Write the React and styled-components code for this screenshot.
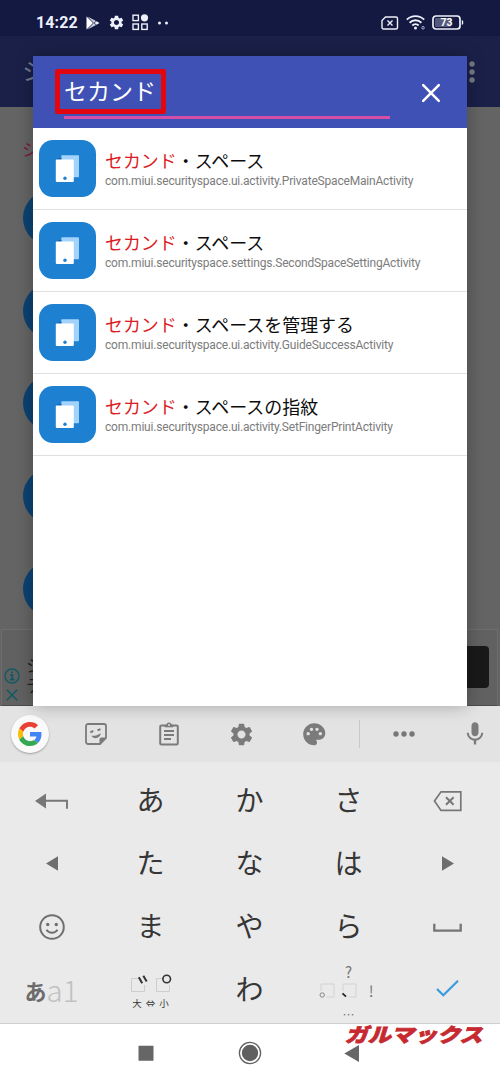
import React from "react";
import styled, { createGlobalStyle } from "styled-components";
import { MdSettings, MdPalette, MdMic } from "react-icons/md";

const GlobalStyle = createGlobalStyle`
  * { box-sizing: border-box; }
  body {
    margin: 0;
    background: #fff;
    font-family: Roboto, "Noto Sans CJK JP", sans-serif;
  }
  svg { display: block; flex: none; }
`;

const Phone = styled.div`
  position: relative;
  display: flex;
  flex-direction: column;
  width: 500px;
  height: 1083px;
  overflow: hidden;
  background: #fff;
`;

/* ---------- dimmed app behind the dialog ---------- */

const Stage = styled.section`
  position: relative;
  display: flex;
  flex-direction: column;
  height: 706px;
  background: #646464;
`;

const StatusBar = styled.header`
  display: flex;
  align-items: center;
  height: 36px;
  padding: 9px 36px 0;
  background: #141941;
  color: #eef0fa;
`;

const Clock = styled.span`
  width: 50px;
  font-size: 16px;
  font-weight: 700;
  line-height: 20px;
  letter-spacing: 0.1px;
`;

const StatusGroup = styled.div`
  display: flex;
  align-items: center;
  gap: ${(p) => p.$gap}px;
  margin-left: ${(p) => (p.$end ? "auto" : 0)};
`;

const AppBar = styled.div`
  display: flex;
  align-items: center;
  justify-content: space-between;
  height: 71px;
  padding: 0 25px 0 22px;
  background: #1a2048;
  color: #74788c;
  font-size: 24px;
  line-height: 24px;
`;

const SectionLabel = styled.div`
  height: 83px;
  padding: 33px 0 0 22px;
  color: #7a1937;
  font-size: 17px;
  line-height: 20px;
`;

const AvatarList = styled.div`
  display: flex;
  flex-direction: column;
  gap: 36.7px;
  height: 439px;
  padding-left: 23px;
`;

const Avatar = styled.div`
  flex: none;
  width: 56px;
  height: 56px;
  border-radius: 50%;
  background: #0c4270;
`;

const AdBanner = styled.div`
  display: flex;
  justify-content: space-between;
  flex: 1;
  margin: 0 2px 0 1px;
  border: 1px solid #6e6e6e;
  border-bottom-color: #4a4a4a;
  background: #616161;
`;

const AdMarks = styled.div`
  display: flex;
  flex-direction: column;
  align-items: center;
  gap: 5px;
  width: 20px;
  padding-top: 38px;
`;

const AdText = styled.div`
  flex: 1;
  padding: 26px 0 0 4px;
  color: #1f1f1f;
  font-size: 17px;
  line-height: 20px;
`;

const AdButton = styled.div`
  width: 60px;
  height: 42px;
  margin: 16px 8px 0 0;
  border-radius: 4px;
  background: #191919;
`;

/* ---------- search dialog ---------- */

const Dialog = styled.main`
  position: absolute;
  top: 56px;
  left: 33px;
  width: 433.5px;
  height: 650px;
  background: #fff;
  box-shadow: 0 0 16px rgba(0, 0, 0, 0.28);
`;

const SearchBar = styled.div`
  display: flex;
  height: 71.5px;
  padding: 0 25px 0 22px;
  background: #3f51b5;
`;

const SearchField = styled.div`
  flex: none;
  width: 335px;
  height: 63px;
`;

const SearchMark = styled.div`
  width: 111px;
  height: 45px;
  margin-top: 13px;
  padding-left: 4px;
  border: 5.5px solid #e2060f;
  border-radius: 2px;
  color: #fff;
  font-size: 23px;
  line-height: 38px;
  white-space: nowrap;
`;

const Underline = styled.div`
  width: 326px;
  height: 3px;
  margin: 2px 0 0 9px;
  background: #d24fa8;
`;

const CloseButton = styled.button`
  display: flex;
  margin: 26.5px 0 0 30.5px;
  padding: 0;
  border: 0;
  background: none;
  height: 20px;
`;

const Row = styled.article`
  display: flex;
  align-items: center;
  height: 82px;
  padding: 0 6px;
  border-bottom: 1px solid #e0e0e0;
`;

const AppIcon = styled.div`
  width: 57px;
  height: 57px;
  margin-right: 9px;
  border-radius: 14px;
  background: #1e80d0;
`;

const RowText = styled.div`
  padding-top: 2px;
  white-space: nowrap;
`;

const Title = styled.div`
  color: #0c0c0c;
  font-size: 17.95px;
  line-height: 23px;
`;

const Match = styled.span`
  color: #dc1c24;
`;

const Subtitle = styled.div`
  color: #7c7c7c;
  font-size: 12px;
  letter-spacing: -0.19px;
  line-height: 16px;
`;

/* ---------- keyboard ---------- */

const Toolbar = styled.div`
  display: grid;
  grid-template-columns: 59px 73px 73px 73px 73px 16px 74px 59px;
  align-items: center;
  justify-items: center;
  height: 56px;
  background: #e3e3e3;
  color: #7b7b7b;
`;

const Round = styled.div`
  display: grid;
  place-items: center;
  width: 38px;
  height: 38px;
  border-radius: 50%;
  background: #fafafa;
  box-shadow: 0 1px 2px rgba(0, 0, 0, 0.3);
`;

const Divider = styled.div`
  width: 1px;
  height: 28px;
  background: #c8c8c8;
`;

const MicSlot = styled.div`
  padding-left: 9px;
`;

const Keys = styled.div`
  display: grid;
  grid-template-columns: repeat(5, 99px);
  grid-auto-rows: 63.1px;
  height: 262px;
  padding: 7px 2px 0;
  border-bottom: 1px solid #cfcfcf;
  background: #eaeaea;
`;

const Key = styled.div`
  display: grid;
  place-items: center;
  color: #363636;
`;

const KanaKey = styled(Key)`
  padding-bottom: 3px;
  font-family: "Noto Sans CJK JP", sans-serif;
  font-size: 28px;
  line-height: 40px;
`;

const ModeKey = styled(KanaKey)`
  display: flex;
  align-items: center;
  justify-content: center;
  padding-bottom: 0;
  color: #6c6c6c;
  font-size: 22px;
  font-weight: 700;
`;

const ModeLatin = styled.span`
  color: #c0c0c0;
  font-size: 29.5px;
  font-weight: 300;
  line-height: 40px;
  padding-bottom: 2px;
`;

const MarkKey = styled(Key)`
  display: flex;
  flex-direction: column;
  align-items: center;
  justify-content: flex-start;
  padding-top: 16px;
  font-family: "Noto Sans CJK JP", sans-serif;
`;

const SizeHint = styled.div`
  display: flex;
  gap: 4px;
  padding-top: 4px;
  font-size: 9.5px;
  line-height: 13px;
`;

const PunctKey = styled(Key)`
  display: flex;
  flex-direction: column;
  align-items: center;
  justify-content: flex-start;
  padding-top: 5px;
  color: #777;
  font-family: "Noto Sans CJK JP", sans-serif;
  font-size: 15px;
  line-height: 18px;
`;

const PunctRow = styled.div`
  display: flex;
  align-items: center;
  gap: 11.5px;
  height: 20px;
  padding-right: 4px;
`;

const PunctDots = styled.div`
  padding-top: 9px;
  font-size: 12px;
  line-height: 12px;
`;

const NavBar = styled.nav`
  display: flex;
  flex: 1;
  padding-left: 95px;
  background: #fff;
`;

const NavSlot = styled.div`
  display: flex;
  justify-content: center;
  width: ${(p) => p.$width}px;
  padding-top: 17px;
`;

const Watermark = styled.div`
  position: absolute;
  left: 346.5px;
  top: 1021px;
  color: #c62a30;
  font-family: "Noto Sans CJK JP", sans-serif;
  font-size: 19.4px;
  font-weight: 900;
  line-height: 26px;
  white-space: nowrap;
  -webkit-text-stroke: 0.8px #c62a30;
  transform-origin: 0 50%;
  transform: scale(1.19, 1) skewX(-14deg);
`;

/* ---------- drawings ---------- */

const PlayIcon = () => (
  <svg width="14" height="14" viewBox="0 0 14 14">
    <path d="M.5.5v13L7 7z" fill="#fff" />
    <path d="M1.5.5 10 5 7.8 7zM1.5 13.5 10 9 7.8 7z" fill="#c9cce2" />
    <path d="M10.5 5.2 13.5 7l-3 1.8L8.6 7z" fill="#eef0fa" />
  </svg>
);

const GridIcon = () => (
  <svg width="17" height="17" viewBox="0 0 17 17" fill="none" stroke="#eef0fa" strokeWidth="1.4">
    <rect x="1" y="1.2" width="5.4" height="5.4" />
    <rect x="1" y="10" width="5.4" height="5.4" />
    <rect x="9.8" y="10" width="5.4" height="5.4" />
    <circle cx="12.5" cy="3.8" r="3.6" fill="#eef0fa" stroke="none" />
  </svg>
);

const DotsIcon = () => (
  <svg width="12" height="4" viewBox="0 0 12 4" fill="#eef0fa">
    <circle cx="2.5" cy="2" r="1.5" />
    <circle cx="9.5" cy="2" r="1.5" />
  </svg>
);

const SimIcon = () => (
  <svg width="18" height="14" viewBox="0 0 18 14" fill="none" stroke="#eef0fa" strokeWidth="1.4">
    <path d="M4.5 1H15a1.5 1.5 0 0 1 1.5 1.5v9A1.5 1.5 0 0 1 15 13H2.5A1.5 1.5 0 0 1 1 11.5V4.5z" />
    <path d="m6.5 4.5 5 5m0-5-5 5" />
  </svg>
);

const WifiIcon = () => (
  <svg width="20" height="15" viewBox="0 0 20 15" fill="none" stroke="#eef0fa" strokeWidth="1.9">
    <path d="M.8 4.6a12.5 12.5 0 0 1 17.4 0M3.6 7.7a8.4 8.4 0 0 1 11.8 0M6.3 10.5a4.6 4.6 0 0 1 6.4 0" />
    <circle cx="9.5" cy="13" r="1.5" fill="#eef0fa" stroke="none" />
    <circle cx="17" cy="12.8" r="1.3" strokeWidth="1" stroke="#a9add0" />
  </svg>
);

const BatteryIcon = () => (
  <svg width="32" height="15" viewBox="0 0 32 15">
    <rect x="1" y="1" width="27" height="13" rx="3" fill="none" stroke="#eef0fa" strokeWidth="1.7" />
    <rect x="3" y="3" width="16" height="9" rx="1" fill="#555a7c" />
    <path d="M29.8 5v5l1.4-.9V5.9z" fill="#eef0fa" />
    <text x="14.5" y="11.3" textAnchor="middle" fontFamily="Roboto, sans-serif" fontSize="10.5" fontWeight="700" fill="#fff">73</text>
  </svg>
);

const OverflowIcon = () => (
  <svg width="6" height="22" viewBox="0 0 6 22" fill="#777a85">
    <circle cx="3" cy="3" r="2.7" />
    <circle cx="3" cy="11" r="2.7" />
    <circle cx="3" cy="19" r="2.7" />
  </svg>
);

const InfoIcon = () => (
  <svg width="16" height="16" viewBox="0 0 16 16" fill="none" stroke="#0f5a63" strokeWidth="1.3">
    <circle cx="8" cy="8" r="7" />
    <path d="M6.3 7H8.3v4.5M6 11.7h4.5M8 3.5v1.8" strokeWidth="1.8" />
  </svg>
);

const AdCloseIcon = () => (
  <svg width="12" height="12" viewBox="0 0 12 12" stroke="#0f5a63" strokeWidth="1.5">
    <path d="m.8.8 10.4 10.4M11.2.8.8 11.2" />
  </svg>
);

const CloseIcon = () => (
  <svg width="20" height="20" viewBox="0 0 20 20" stroke="#fff" strokeWidth="2.5" strokeLinecap="round">
    <path d="m2.2 2.2 15.6 15.6M17.8 2.2 2.2 17.8" />
  </svg>
);

const TabletsIcon = () => (
  <svg width="57" height="57" viewBox="0 0 57 57">
    <rect x="22.3" y="15.3" width="17.7" height="22" rx=".8" fill="#a3d2fa" />
    <path d="M18.5 19.5h4V18h-3z" fill="#1a5ea6" />
    <rect x="16.8" y="19.5" width="18" height="22.5" rx="1" fill="#fff" />
    <circle cx="26" cy="38.3" r="1.7" fill="#1e80d0" />
  </svg>
);

const GoogleIcon = () => (
  <svg width="24" height="24" viewBox="0 0 48 48">
    <path fill="#EA4335" d="M24 9.5c3.54 0 6.71 1.22 9.21 3.6l6.85-6.85C35.9 2.38 30.47 0 24 0 14.62 0 6.51 5.38 2.56 13.22l7.98 6.19C12.43 13.72 17.74 9.5 24 9.5z" />
    <path fill="#4285F4" d="M46.98 24.55c0-1.57-.15-3.09-.38-4.55H24v9.02h12.94c-.58 2.96-2.26 5.48-4.78 7.18l7.73 6c4.51-4.18 7.09-10.36 7.09-17.65z" />
    <path fill="#FBBC05" d="M10.53 28.59c-.48-1.45-.76-2.99-.76-4.59s.27-3.14.76-4.59l-7.98-6.19C.92 16.46 0 20.12 0 24c0 3.88.92 7.54 2.56 10.78l7.97-6.19z" />
    <path fill="#34A853" d="M24 48c6.48 0 11.93-2.13 15.89-5.81l-7.73-6c-2.15 1.45-4.92 2.3-8.16 2.3-6.26 0-11.57-4.22-13.47-9.91l-7.98 6.19C6.51 42.62 14.62 48 24 48z" />
  </svg>
);

const StickerIcon = () => (
  <svg width="22" height="22" viewBox="0 0 22 22" fill="none" stroke="#7b7b7b" strokeWidth="1.8">
    <path d="M3 1h16a2 2 0 0 1 2 2v12l-6 6H3a2 2 0 0 1-2-2V3a2 2 0 0 1 2-2z" />
    <path d="M21 14.5h-4.5a2 2 0 0 0-2 2V21z" fill="#7b7b7b" stroke="none" />
    <path d="m5.3 9.3 3-1.3M12.5 7.3l3-1" strokeWidth="2" />
    <path d="M6.3 12.7c3.5.3 6.5-.6 9.5-2.5-.5 4.8-7 7-9.5 2.5z" fill="#7b7b7b" stroke="none" />
  </svg>
);

const ClipboardIcon = () => (
  <svg width="20" height="24" viewBox="0 0 20 24" fill="none" stroke="#7b7b7b" strokeWidth="2">
    <rect x="1.2" y="3.5" width="17.6" height="19" rx="1.2" />
    <path d="M6 3.2h1.7a2.3 2.3 0 0 1 4.6 0H14v1.6H6z" fill="#7b7b7b" strokeWidth="1" />
    <circle cx="10" cy="3" r=".9" fill="#e3e3e3" stroke="none" />
    <path d="M5 9h10M5 13h10M5 17h7" strokeWidth="1.9" />
  </svg>
);

const MoreIcon = () => (
  <svg width="22" height="6" viewBox="0 0 22 6" fill="#777">
    <circle cx="3" cy="3" r="2.7" />
    <circle cx="11" cy="3" r="2.7" />
    <circle cx="19" cy="3" r="2.7" />
  </svg>
);

const ReturnIcon = () => (
  <svg width="33" height="16" viewBox="0 0 33 16">
    <path d="M0 8 11 .5v15z" fill="#777" />
    <path d="M10 7.7h22v8" fill="none" stroke="#777" strokeWidth="1.9" />
  </svg>
);

const BackspaceIcon = () => (
  <svg width="30" height="22" viewBox="0 0 30 22" fill="none" stroke="#777" strokeWidth="1.7">
    <path d="M8 1.8h19.8v18.6H8L1.5 11z" />
    <path d="m13 7.2 7.6 7.6m0-7.6L13 14.8" strokeWidth="2" />
  </svg>
);

const Arrow = ({ flip }) => (
  <svg width="12" height="15" viewBox="0 0 12 15" fill="#6e6e6e">
    <path d={flip ? "M0 .3v14.4L12 7.5z" : "M12 .3v14.4L0 7.5z"} />
  </svg>
);

const SmileIcon = () => (
  <svg width="26" height="26" viewBox="0 0 26 26" fill="none" stroke="#6f6f6f" strokeWidth="2">
    <circle cx="13" cy="13" r="11.8" />
    <circle cx="8.7" cy="10.5" r="1.7" fill="#6f6f6f" stroke="none" />
    <circle cx="17.3" cy="10.5" r="1.7" fill="#6f6f6f" stroke="none" />
    <path d="M7.5 15.8c2.5 4 8.5 4 11 0" />
  </svg>
);

const SpaceIcon = () => (
  <svg width="29" height="11" viewBox="0 0 29 11" fill="none" stroke="#757575" strokeWidth="2.3">
    <path d="M1.3 2.8v6.8h26.4V2.8" />
  </svg>
);

const CheckIcon = () => (
  <svg width="23" height="20" viewBox="0 0 23 20" fill="none" stroke="#3a9bdc" strokeWidth="2.2">
    <path d="m1 9 6.3 6.3L22 .8" />
  </svg>
);

const VoicingIcon = () => (
  <svg width="42" height="19" viewBox="0 0 42 19" fill="none">
    <path d="M8 4.5H1.5V17.5h13V11M33 4.5h-6.5V17.5h13V11" stroke="#cdcdcd" />
    <path d="m8.800 3.300 3.400 6M13.300 1.800l3.400 5.800" stroke="#333" strokeWidth="2" />
    <circle cx="36.700" cy="5" r="3.800" stroke="#333" strokeWidth="1.600" />
  </svg>
);

const CommaIcon = () => (
  <svg width="38" height="15" viewBox="0 0 38 15" fill="none">
    <path d="M2 8V1h13v13H7.500M24 8V1h13v13h-7.500" stroke="#d2d2d2" />
    <circle cx="3.200" cy="12" r="2.200" stroke="#888" />
    <path d="m23.500 10.300 3.500 3.300" stroke="#222" strokeWidth="1.800" />
  </svg>
);

const SquareNav = () => (
  <svg width="16" height="30" viewBox="0 0 16 30" fill="#666">
    <rect x=".5" y="4.800" width="15" height="15" rx=".6" />
  </svg>
);

const HomeNav = () => (
  <svg width="24" height="24" viewBox="0 0 24 24" fill="none" stroke="#606060">
    <circle cx="12" cy="12" r="10.600" strokeWidth="1.300" />
    <circle cx="12" cy="12" r="8.200" fill="#606060" stroke="none" />
  </svg>
);

const BackNav = () => (
  <svg width="15" height="30" viewBox="0 0 15 30" fill="#666">
    <path d="M15 4v17L.3 12.500z" />
  </svg>
);

/* ---------- content ---------- */

const results = [
  { rest: "・スペース", activity: "com.miui.securityspace.ui.activity.PrivateSpaceMainActivity" },
  { rest: "・スペース", activity: "com.miui.securityspace.settings.SecondSpaceSettingActivity" },
  { rest: "・スペースを管理する", activity: "com.miui.securityspace.ui.activity.GuideSuccessActivity" },
  { rest: "・スペースの指紋", activity: "com.miui.securityspace.ui.activity.SetFingerPrintActivity" },
];

export default function App() {
  return (
    <Phone>
      <GlobalStyle />
      <Stage>
        <StatusBar>
          <Clock>14:22</Clock>
          <StatusGroup $gap={7.5}>
            <PlayIcon />
            <MdSettings size={17} />
            <GridIcon />
            <DotsIcon />
          </StatusGroup>
          <StatusGroup $gap={6.5} $end>
            <SimIcon />
            <WifiIcon />
            <BatteryIcon />
          </StatusGroup>
        </StatusBar>
        <AppBar>
          <span>シ</span>
          <OverflowIcon />
        </AppBar>
        <SectionLabel>シ</SectionLabel>
        <AvatarList>
          {[0, 1, 2, 3, 4].map((i) => <Avatar key={i} />)}
        </AvatarList>
        <AdBanner>
          <AdMarks>
            <InfoIcon />
            <AdCloseIcon />
          </AdMarks>
          <AdText>シ<br />テ</AdText>
          <AdButton />
        </AdBanner>

        <Dialog>
          <SearchBar>
            <SearchField>
              <SearchMark>セカンド</SearchMark>
              <Underline />
            </SearchField>
            <CloseButton aria-label="閉じる"><CloseIcon /></CloseButton>
          </SearchBar>
          {results.map((r) => (
            <Row key={r.activity}>
              <AppIcon><TabletsIcon /></AppIcon>
              <RowText>
                <Title><Match>セカンド</Match>{r.rest}</Title>
                <Subtitle>{r.activity}</Subtitle>
              </RowText>
            </Row>
          ))}
        </Dialog>
      </Stage>

      <Toolbar>
        <Round><GoogleIcon /></Round>
        <StickerIcon />
        <ClipboardIcon />
        <MdSettings size={27} />
        <MdPalette size={26.5} />
        <Divider />
        <MoreIcon />
        <MicSlot><MdMic size={28} /></MicSlot>
      </Toolbar>

      <Keys>
        <Key><ReturnIcon /></Key>
        <KanaKey>あ</KanaKey>
        <KanaKey>か</KanaKey>
        <KanaKey>さ</KanaKey>
        <Key><BackspaceIcon /></Key>
        <Key><Arrow /></Key>
        <KanaKey>た</KanaKey>
        <KanaKey>な</KanaKey>
        <KanaKey>は</KanaKey>
        <Key><Arrow flip /></Key>
        <Key><SmileIcon /></Key>
        <KanaKey>ま</KanaKey>
        <KanaKey>や</KanaKey>
        <KanaKey>ら</KanaKey>
        <Key><SpaceIcon /></Key>
        <ModeKey>あ<ModeLatin>a1</ModeLatin></ModeKey>
        <MarkKey>
          <VoicingIcon />
          <SizeHint><span>大</span><span>⇔</span><span>小</span></SizeHint>
        </MarkKey>
        <KanaKey>わ</KanaKey>
        <PunctKey>
          <span>?</span>
          <PunctRow><CommaIcon /><span>!</span></PunctRow>
          <PunctDots>…</PunctDots>
        </PunctKey>
        <Key><CheckIcon /></Key>
      </Keys>

      <NavBar>
        <NavSlot $width={102}><SquareNav /></NavSlot>
        <NavSlot $width={105}><HomeNav /></NavSlot>
        <NavSlot $width={98}><BackNav /></NavSlot>
      </NavBar>

      <Watermark>ガルマックス</Watermark>
    </Phone>
  );
}
